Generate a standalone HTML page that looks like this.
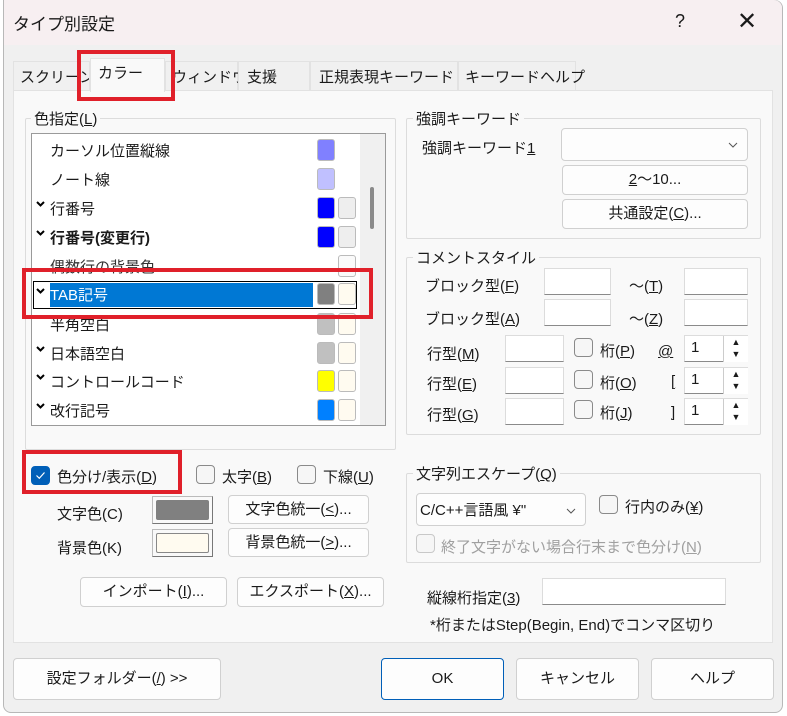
<!DOCTYPE html>
<html><head><meta charset="utf-8"><style>
*{box-sizing:border-box;margin:0;padding:0}
body{width:787px;height:716px;overflow:hidden;background:#fff;font-family:"Liberation Sans","Noto Sans CJK JP",sans-serif;font-size:15px;color:#1a1a1a;position:relative}
.a{position:absolute;white-space:nowrap}
#win{position:absolute;left:3px;top:0;width:780px;height:713px;background:#f0f0f0;border:1px solid #b8b8b8;border-radius:0 8px 8px 8px}
.btn{position:absolute;background:#fdfdfd;border:1px solid #d0d0d0;border-radius:4px;text-align:center;font-size:15px}
.inp{position:absolute;background:#fff;border:1px solid #dcdcdc;border-bottom:1px solid #8a8a8a}
.cb{position:absolute;width:19px;height:19px;border:1px solid #8a8a8a;border-radius:4px;background:#f6f6f6}
.grp{position:absolute;border:1px solid #dcdcdc;border-radius:2px}
.gl{position:absolute;background:#f9f9f9;padding:0 3px;white-space:nowrap}
.sw{position:absolute;width:18px;height:22px;border-radius:3px;border:1px solid #bbb}
.red{position:absolute;border:4px solid #e0202a}
.row{position:absolute;left:50px;white-space:nowrap}
.ck{position:absolute;left:36px;width:9px;height:7px}
u{text-decoration:underline}
</style></head><body>
<div id="win"></div>
<div class="a" style="left:4px;top:0;width:778px;height:45px;background:#f7eff1;border-radius:0 8px 0 0"></div>
<div class="a" style="left:13px;top:10px;font-size:17px">タイプ別設定</div>
<div class="a" style="left:675px;top:11px;font-size:18px">?</div>
<div class="a" style="left:737px;top:7px;font-size:24px;font-weight:300">✕</div>
<div class="a" style="left:13px;top:90px;width:760px;height:553px;background:#f9f9f9;border:1px solid #e2e2e2"></div>
<div class="a" style="left:13px;top:61px;width:77px;height:30px;border:1px solid #e2e2e2;background:#f0f0f0;padding:4px 0 0 6px;overflow:hidden">スクリーン</div>
<div class="a" style="left:165px;top:61px;width:73px;height:30px;border:1px solid #e2e2e2;background:#f0f0f0;padding:4px 0 0 6px;overflow:visible">ウィンドウ</div>
<div class="a" style="left:90px;top:58px;width:75px;height:34px;border:1px solid #e2e2e2;border-bottom:none;background:#f9f9f9;padding:3px 0 0 7px">カラー</div>
<div class="a" style="left:238px;top:61px;width:72px;height:30px;border:1px solid #e2e2e2;background:#f0f0f0;padding:4px 0 0 8px">支援</div>
<div class="a" style="left:310px;top:61px;width:148px;height:30px;border:1px solid #e2e2e2;background:#f0f0f0;padding:4px 0 0 8px">正規表現キーワード</div>
<div class="a" style="left:458px;top:61px;width:118px;height:30px;border:1px solid #e2e2e2;background:#f0f0f0;padding:4px 0 0 6px">キーワードヘルプ</div>
<div class="red" style="left:77px;top:50px;width:98px;height:51px"></div>
<div class="grp" style="left:25px;top:118px;width:371px;height:332px"></div>
<div class="gl" style="left:31px;top:108px">色指定(<u>L</u>)</div>
<div class="a" style="left:31px;top:133px;width:355px;height:293px;background:#fff;border:1px solid #9a9a9a;overflow:hidden">
 <div class="a" style="left:328px;top:0;width:26px;height:293px;background:#f0f0f0"></div>
 <div class="a" style="left:338px;top:53px;width:4px;height:42px;background:#8a8a8a;border-radius:2px"></div>
</div>
<div class="row" style="top:140px">カーソル位置縦線</div><div class="sw" style="left:317px;top:139px;background:#8080ff"></div>
<div class="row" style="top:169px">ノート線</div><div class="sw" style="left:317px;top:168px;background:#c0c0ff"></div>
<svg class="ck" style="top:200px" viewBox="0 0 9 7"><path d="M1 2L4.5 5.5L8 2" stroke="#000" stroke-width="2" fill="none"/></svg>
<div class="row" style="top:198px">行番号</div><div class="sw" style="left:317px;top:197px;background:#0000ff"></div><div class="sw" style="left:338px;top:197px;background:#eee"></div>
<svg class="ck" style="top:229px" viewBox="0 0 9 7"><path d="M1 2L4.5 5.5L8 2" stroke="#000" stroke-width="2" fill="none"/></svg>
<div class="row" style="top:227px;font-weight:bold">行番号(変更行)</div><div class="sw" style="left:317px;top:226px;background:#0000ff"></div><div class="sw" style="left:338px;top:226px;background:#eee"></div>
<div class="row" style="top:256px;color:#333">偶数行の背景色</div><div class="sw" style="left:338px;top:255px;background:#fafafa"></div>
<div class="a" style="left:33px;top:281px;width:324px;height:28px;border:1px solid #000"></div>
<div class="a" style="left:50px;top:283px;width:263px;height:24px;background:#0078d4"></div>
<svg class="ck" style="top:287px" viewBox="0 0 9 7"><path d="M1 2L4.5 5.5L8 2" stroke="#000" stroke-width="2" fill="none"/></svg>
<div class="row" style="top:284px;color:#fff">TAB記号</div>
<div class="sw" style="left:317px;top:283px;background:#808080"></div><div class="sw" style="left:338px;top:283px;background:#fffbf0"></div>
<div class="row" style="top:314px">半角空白</div><div class="sw" style="left:317px;top:313px;background:#c0c0c0"></div><div class="sw" style="left:338px;top:313px;background:#fffbf0"></div>
<svg class="ck" style="top:345px" viewBox="0 0 9 7"><path d="M1 2L4.5 5.5L8 2" stroke="#000" stroke-width="2" fill="none"/></svg>
<div class="row" style="top:343px">日本語空白</div><div class="sw" style="left:317px;top:342px;background:#c0c0c0"></div><div class="sw" style="left:338px;top:342px;background:#fffbf0"></div>
<svg class="ck" style="top:373px" viewBox="0 0 9 7"><path d="M1 2L4.5 5.5L8 2" stroke="#000" stroke-width="2" fill="none"/></svg>
<div class="row" style="top:371px">コントロールコード</div><div class="sw" style="left:317px;top:370px;background:#ffff00"></div><div class="sw" style="left:338px;top:370px;background:#fffbf0"></div>
<svg class="ck" style="top:402px" viewBox="0 0 9 7"><path d="M1 2L4.5 5.5L8 2" stroke="#000" stroke-width="2" fill="none"/></svg>
<div class="row" style="top:400px">改行記号</div><div class="sw" style="left:317px;top:399px;background:#0080ff"></div><div class="sw" style="left:338px;top:399px;background:#fffbf0"></div>
<div class="red" style="left:22px;top:268px;width:351px;height:51px"></div>
<div class="cb" style="left:31px;top:466px;background:#005fb8;border-color:#005fb8"><svg width="17" height="17" viewBox="0 0 17 17" style="position:absolute;left:0;top:0"><path d="M4.5 8.5L7.3 11.3L12.5 5.5" stroke="#fff" stroke-width="1.2" fill="none"/></svg></div>
<div class="a" style="left:57px;top:466px">色分け/表示(<u>D</u>)</div>
<div class="red" style="left:22px;top:450px;width:160px;height:44px"></div>
<div class="cb" style="left:196px;top:465px"></div><div class="a" style="left:222px;top:466px">太字(<u>B</u>)</div>
<div class="cb" style="left:297px;top:465px"></div><div class="a" style="left:323px;top:466px">下線(<u>U</u>)</div>
<div class="a" style="left:57px;top:503px">文字色(C)</div>
<div class="a" style="left:152px;top:496px;width:61px;height:28px;border:1px solid #bbb;border-right-color:#777;border-bottom-color:#777;padding:3px"><div style="width:100%;height:100%;background:#808080;border-radius:2px"></div></div>
<div class="btn" style="left:228px;top:495px;width:141px;height:29px;line-height:27px">文字色統一(<u>&lt;</u>)...</div>
<div class="a" style="left:57px;top:537px">背景色(K)</div>
<div class="a" style="left:152px;top:529px;width:61px;height:28px;border:1px solid #bbb;border-right-color:#777;border-bottom-color:#777;padding:3px"><div style="width:100%;height:100%;background:#fffbf0;border:1px solid #888;border-radius:2px"></div></div>
<div class="btn" style="left:228px;top:528px;width:141px;height:29px;line-height:27px">背景色統一(<u>&gt;</u>)...</div>
<div class="btn" style="left:80px;top:577px;width:147px;height:30px;line-height:28px">インポート(<u>I</u>)...</div>
<div class="btn" style="left:237px;top:577px;width:147px;height:30px;line-height:28px">エクスポート(<u>X</u>)...</div>
<div class="grp" style="left:406px;top:118px;width:355px;height:121px"></div>
<div class="gl" style="left:413px;top:108px">強調キーワード</div>
<div class="a" style="left:422px;top:137px">強調キーワード<u>1</u></div>
<div class="btn" style="left:561px;top:128px;width:187px;height:33px"><svg width="10" height="6" viewBox="0 0 10 6" style="position:absolute;right:9px;top:13px"><path d="M1 1L5 5L9 1" stroke="#555" fill="none"/></svg></div>
<div class="btn" style="left:562px;top:165px;width:186px;height:30px;line-height:28px"><u>2</u>〜10...</div>
<div class="btn" style="left:562px;top:199px;width:186px;height:30px;line-height:28px">共通設定(<u>C</u>)...</div>
<div class="grp" style="left:406px;top:257px;width:355px;height:178px"></div>
<div class="gl" style="left:413px;top:247px">コメントスタイル</div>
<div class="a" style="left:425px;top:275px">ブロック型(<u>F</u>)</div>
<div class="inp" style="left:544px;top:268px;width:67px;height:27px"></div>
<div class="a" style="left:629px;top:275px">〜(<u>T</u>)</div>
<div class="inp" style="left:684px;top:268px;width:64px;height:27px"></div>
<div class="a" style="left:425px;top:308px">ブロック型(<u>A</u>)</div>
<div class="inp" style="left:544px;top:299px;width:67px;height:27px"></div>
<div class="a" style="left:629px;top:308px">〜(<u>Z</u>)</div>
<div class="inp" style="left:684px;top:299px;width:64px;height:27px"></div>
<div class="a" style="left:427px;top:343px">行型(<u>M</u>)</div>
<div class="inp" style="left:505px;top:335px;width:59px;height:27px"></div>
<div class="cb" style="left:574px;top:338px"></div><div class="a" style="left:600px;top:340px">桁(<u>P</u>)</div>
<div class="a" style="left:658px;top:343px"><u>@</u></div>
<div class="a" style="left:427px;top:373px">行型(<u>E</u>)</div>
<div class="inp" style="left:505px;top:367px;width:59px;height:27px"></div>
<div class="cb" style="left:574px;top:370px"></div><div class="a" style="left:600px;top:372px">桁(<u>O</u>)</div>
<div class="a" style="left:671px;top:373px"><u>[</u></div>
<div class="a" style="left:427px;top:404px">行型(<u>G</u>)</div>
<div class="inp" style="left:505px;top:398px;width:59px;height:27px"></div>
<div class="cb" style="left:574px;top:400px"></div><div class="a" style="left:600px;top:402px">桁(<u>J</u>)</div>
<div class="a" style="left:671px;top:404px"><u>]</u></div>
<div class="inp" style="left:684px;top:335px;width:64px;height:27px;padding:3px 0 0 6px">1</div>
<div class="inp" style="left:684px;top:367px;width:64px;height:27px;padding:3px 0 0 6px">1</div>
<div class="inp" style="left:684px;top:398px;width:64px;height:27px;padding:3px 0 0 6px">1</div>
<div class="a" style="left:723px;top:336px;width:25px;height:26px;background:#fff;border-left:1px solid #ccc;font-size:9px;text-align:center;line-height:12px">▲<br>▼</div>
<div class="a" style="left:723px;top:368px;width:25px;height:26px;background:#fff;border-left:1px solid #ccc;font-size:9px;text-align:center;line-height:12px">▲<br>▼</div>
<div class="a" style="left:723px;top:399px;width:25px;height:26px;background:#fff;border-left:1px solid #ccc;font-size:9px;text-align:center;line-height:12px">▲<br>▼</div>
<div class="grp" style="left:406px;top:473px;width:355px;height:90px"></div>
<div class="gl" style="left:413px;top:463px">文字列エスケープ(<u>Q</u>)</div>
<div class="btn" style="left:416px;top:493px;width:170px;height:33px;text-align:left;padding:5px 0 0 3px">C/C++言語風 ¥"<svg width="10" height="6" viewBox="0 0 10 6" style="position:absolute;right:9px;top:14px"><path d="M1 1L5 5L9 1" stroke="#555" fill="none"/></svg></div>
<div class="cb" style="left:599px;top:495px"></div><div class="a" style="left:625px;top:496px">行内のみ(<u>¥</u>)</div>
<div class="cb" style="left:416px;top:534px;border-color:#c8c8c8"></div><div class="a" style="left:441px;top:536px;color:#a0a0a0">終了文字がない場合行末まで色分け(<u>N</u>)</div>
<div class="a" style="left:427px;top:587px">縦線桁指定(<u>3</u>)</div>
<div class="inp" style="left:542px;top:578px;width:184px;height:27px"></div>
<div class="a" style="left:430px;top:614px">*桁またはStep(Begin, End)でコンマ区切り</div>
<div class="btn" style="left:13px;top:658px;width:208px;height:42px;line-height:40px">設定フォルダー(<u>/</u>) &gt;&gt;</div>
<div class="btn" style="left:381px;top:658px;width:123px;height:42px;line-height:40px;border:1px solid #005fb8">OK</div>
<div class="btn" style="left:516px;top:658px;width:123px;height:42px;line-height:40px">キャンセル</div>
<div class="btn" style="left:651px;top:658px;width:123px;height:42px;line-height:40px">ヘルプ</div>
</body></html>
